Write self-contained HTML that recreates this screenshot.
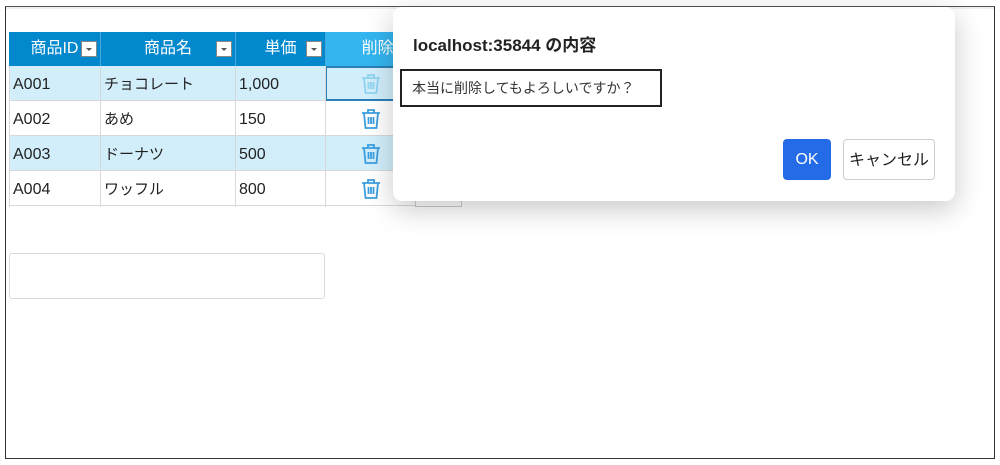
<!DOCTYPE html>
<html><head><meta charset="utf-8"><style>
*{margin:0;padding:0;box-sizing:border-box}
body{width:1000px;height:465px;background:#fff;position:relative;overflow:hidden;font-family:"Liberation Sans","Noto Sans CJK JP",sans-serif}
.a{position:absolute}
.frame{left:5px;top:6px;width:990px;height:453px;border:1px solid #333;border-top:1px solid #555}
.pink{left:6px;top:7px;width:988px;height:2px;background:#f4eeee}
.c{position:absolute;font-size:16px;color:#222;line-height:34px;padding-left:4px;padding-top:2px}
.h{position:absolute;top:32px;height:34px;background:#0288cc;color:#fff;font-size:16px;line-height:34px;text-align:center}
.dd{position:absolute;top:9px;width:16px;height:16px;background:#fff;border:1px solid #888}
.dd:after{content:"";position:absolute;left:4px;top:6px;border:3px solid transparent;border-top:3px solid #555}
.row{position:absolute;left:9px;width:407px;height:35px;border-bottom:1px solid #d8d8d8}
.vl{position:absolute;top:66px;width:1px;height:141px;background:#d8d8d8}
.trash{position:absolute;left:361px}
</style></head><body>
<div class="a frame"></div><div class="a pink"></div>
<div class="h" style="left:9px;width:91px">商品ID<div class="dd" style="left:72px"></div></div>
<div class="h" style="left:100px;width:135px;border-left:1px solid #46a8dc">商品名<div class="dd" style="left:115px"></div></div>
<div class="h" style="left:235px;width:90px;border-left:1px solid #46a8dc">単価<div class="dd" style="left:70px"></div></div>
<div class="h" style="left:325px;width:91px;background:#34b5ef;border-left:1px solid #46a8dc">&nbsp;&nbsp;&nbsp;削除</div>
<div class="row" style="top:66px;background:#d2eefb"></div>
<div class="row" style="top:101px;background:#fff"></div>
<div class="row" style="top:136px;background:#d2eefb"></div>
<div class="row" style="top:171px;background:#fff"></div>
<div class="a" style="left:325px;top:66px;width:91px;height:35px;border:2px solid #2b7fb8;border-right:none"></div>
<div class="vl" style="left:9px"></div><div class="vl" style="left:100px"></div><div class="vl" style="left:235px"></div><div class="vl" style="left:325px"></div>
<div class="a" style="left:415px;top:188px;width:47px;height:19px;border:1px solid #ccc;border-top:none"></div>
<div class="c" style="left:9px;top:66px">A001</div><div class="c" style="left:100px;top:66px;font-size:15px">チョコレート</div><div class="c" style="left:235px;top:66px">1,000</div>
<div class="c" style="left:9px;top:101px">A002</div><div class="c" style="left:100px;top:101px;font-size:15px">あめ</div><div class="c" style="left:235px;top:101px">150</div>
<div class="c" style="left:9px;top:136px">A003</div><div class="c" style="left:100px;top:136px;font-size:15px">ドーナツ</div><div class="c" style="left:235px;top:136px">500</div>
<div class="c" style="left:9px;top:171px">A004</div><div class="c" style="left:100px;top:171px;font-size:15px">ワッフル</div><div class="c" style="left:235px;top:171px">800</div>
<svg class="trash" style="top:73px" width="20" height="22" viewBox="0 0 20 22" fill="none" stroke="#8fd3f2" stroke-width="1.8"><path d="M1 5h18M7 5V2h6v3M3 5l1.5 15h11L17 5M7.5 9v7M10 9v7M12.5 9v7"/></svg>
<svg class="trash" style="top:108px" width="20" height="22" viewBox="0 0 20 22" fill="none" stroke="#3a9ee0" stroke-width="1.8"><path d="M1 5h18M7 5V2h6v3M3 5l1.5 15h11L17 5M7.5 9v7M10 9v7M12.5 9v7"/></svg>
<svg class="trash" style="top:143px" width="20" height="22" viewBox="0 0 20 22" fill="none" stroke="#3a9ee0" stroke-width="1.8"><path d="M1 5h18M7 5V2h6v3M3 5l1.5 15h11L17 5M7.5 9v7M10 9v7M12.5 9v7"/></svg>
<svg class="trash" style="top:178px" width="20" height="22" viewBox="0 0 20 22" fill="none" stroke="#3a9ee0" stroke-width="1.8"><path d="M1 5h18M7 5V2h6v3M3 5l1.5 15h11L17 5M7.5 9v7M10 9v7M12.5 9v7"/></svg>
<div class="a" style="left:9px;top:253px;width:316px;height:46px;border:1px solid #d6dbe0;border-radius:3px"></div>
<div class="a" style="left:393px;top:7px;width:562px;height:194px;background:#fff;border-radius:9px;box-shadow:0 8px 28px rgba(0,0,0,.22)">
<div class="a" style="left:20px;top:24px;font-size:17px;color:#222;font-weight:bold">localhost:35844 の内容</div>
<div class="a" style="left:7px;top:62px;width:262px;height:38px;border:2px solid #222;font-size:14px;color:#333;line-height:34px;padding-left:10px">本当に削除してもよろしいですか？</div>
<div class="a" style="left:390px;top:132px;width:48px;height:41px;background:#246be8;border-radius:4px;color:#fff;font-size:16px;line-height:41px;text-align:center">OK</div>
<div class="a" style="left:450px;top:132px;width:92px;height:41px;border:1px solid #ccc;border-radius:4px;color:#222;font-size:16px;line-height:41px;text-align:center">キャンセル</div>
</div>
</body></html>
